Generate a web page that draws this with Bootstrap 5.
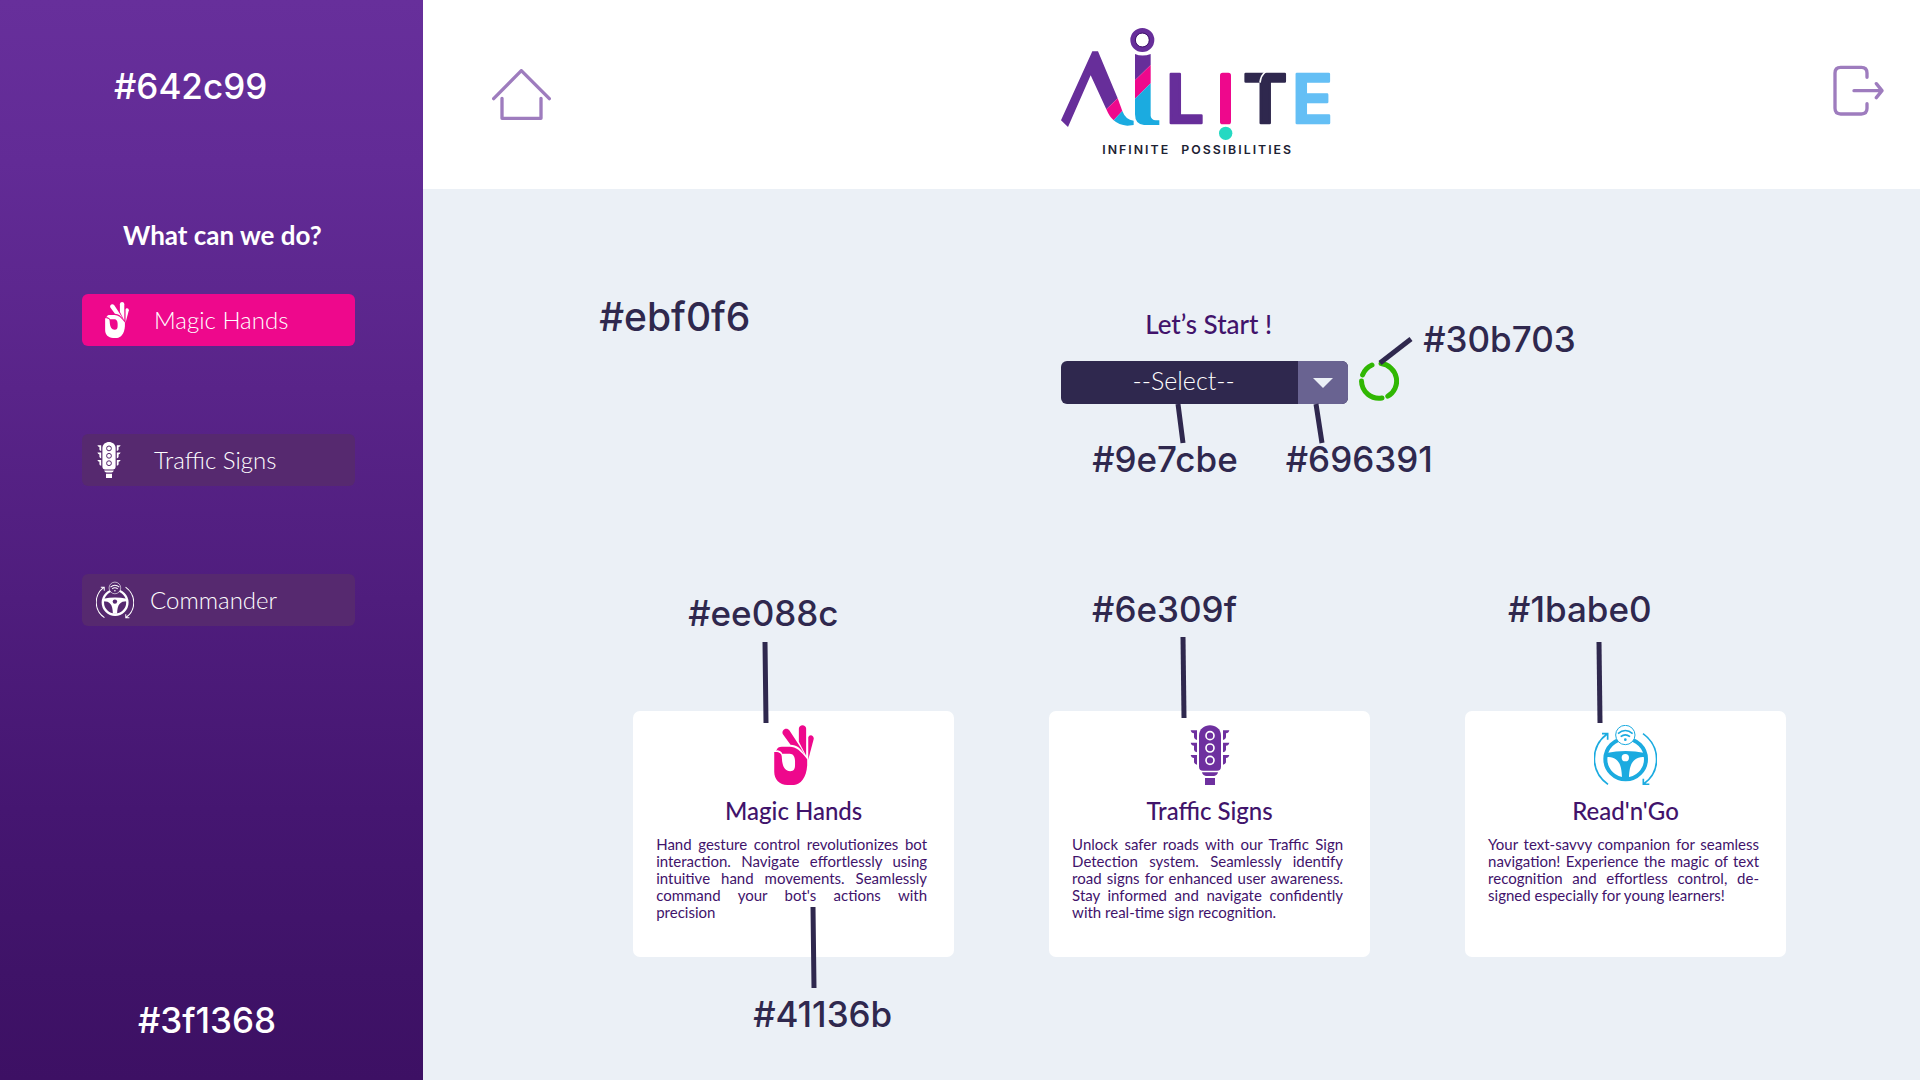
<!DOCTYPE html>
<html lang="en">
<head>
<meta charset="utf-8">
<meta name="viewport" content="width=device-width, initial-scale=1">
<title>AiLite – Infinite Possibilities</title>
<link href="https://cdn.jsdelivr.net/npm/bootstrap@5.3.0/dist/css/bootstrap.min.css" rel="stylesheet">
<style>
  :root { --ink: #2f284e; --deep: #41136b; --lilac: #9e7cbe; }
  body { background: #ebf0f6; color: var(--deep); font-family: Lato, "Open Sans", sans-serif; }
  .side { flex: 0 0 22.04%; min-width: 400px; padding: 66px 68px 40px 82px;
    background: linear-gradient(#672f9b 0%, #622b96 15%, #592489 36%, #451671 75%, #3f1368 90%, #3d1064 100%); }
  .side-title { font-size: 26px; font-weight: 700; line-height: 30px; margin: 114px 0 44px 41px; }
  .side-nav { gap: 88px; }
  .side-btn { --gap: #56296f; height: 52px; border: 0; border-radius: 6px; background: var(--gap); color: #fff;
    font-size: 24px; font-weight: 300; line-height: 30px; padding: 0 14px; }
  .side-btn.active { --gap: #ee088c; }
  .side-icon { width: 38px; height: 38px; flex: none; }
  .side-icon-s { height: 36px; width: 26px; }
  .tag { font-family: Inter, "Open Sans", sans-serif; font-size: 35px; font-weight: 500; line-height: 40px;
    color: var(--ink); white-space: nowrap; }
  .tag-lg { font-size: 39px; }
  .topbar { min-height: 189px; padding: 10px 36px 19px 69px; }
  .topbar a { color: var(--lilac); }
  .stroke-icon { fill: none; stroke: currentColor; stroke-width: 10; stroke-linecap: round; stroke-linejoin: round; }
  .start { padding: 108px 60px 110px 176px; }
  .start-left { flex: 0 0 462px; }
  .start-pick { flex: 0 0 287px; min-width: 0; padding-top: 12px; }
  .section-title { font-size: 24px; font-weight: 500; line-height: 30px; }
  .start-title { font-size: 26px; }
  .picker { height: 43px; border-radius: 6px; overflow: hidden; margin-top: 22px; }
  .picker select { appearance: none; width: 100%; height: 100%; border: 0; background: var(--ink); color: #fff;
    font-size: 25px; font-weight: 300; text-align: center; text-align-last: center; padding: 0 42px 4px 0; }
  .picker-arrow { position: absolute; inset: 0 0 0 auto; width: 50px; background: #696391; pointer-events: none; }
  .pick-tags { margin-top: 35px; padding-left: 31px; gap: 48px; }
  .start-spin { padding: 22px 0 0 11px; gap: 24px; }
  .spinner-ring { margin-top: 42px; }
  .pointer { position: absolute; overflow: visible; stroke: var(--ink); stroke-width: 5; pointer-events: none; }
  .features { padding: 0 134px 40px 210px; gap: 95px; }
  .feature { flex: 1 1 0; min-width: 300px; }
  .feature-head { height: 122px; padding-left: 43px; }
  .feature-head-in { padding-left: 12px; }
  .feature-foot { margin-top: 37px; padding-left: 120px; }
  .feature-card { --gap: #fff; min-height: 246px; border: 0; border-radius: 7px; padding: 14px 0 16px; }
  .feature-card h2 { margin: 11px 0 0; }
  .feature-card p { font-size: 15px; line-height: 17px; text-align: justify; margin: 10px 0 0; padding: 0 27px 0 23px; }
</style>
</head>
<body>
<svg width="0" height="0" class="position-absolute" aria-hidden="true">
  <symbol id="hand" viewBox="465 438 114 173">
    <g fill="currentColor">
      <path d="M490 465C484 452 501 442 509 454L541 503 553 524C541 505 530 495 512 495Z"/>
      <path d="M536 449C536 435 557 435 557 449V527L536 486Z"/>
      <path d="M563 475C565 464 579 466 579 478L563 538Z"/>
      <path d="M471 512C474 504 479 501 487 501H510C527 501 542 513 560 537V555C558 590 540 611 522 611H503C480 611 465 595 465 573V516H473C483 518 487 522 487 533C488 558 496 571 511 571C522 571 525 563 525 553V542C525 529 519 521 510 521H488C485 514 479 512 471 512Z"/>
      <path d="M472 512Q482 512 487 521" fill="none" stroke="var(--gap)" stroke-width="3"/>
    </g>
  </symbol>
  <symbol id="traffic" viewBox="482 435 116 180">
    <g fill="currentColor">
      <path d="M507 467C507 425 573 425 573 467V560Q573 572 561 572H519Q507 572 507 560Z"/>
      <path d="M482 451H501V480Q493 479 492 472V460Q484 460 482 451Z"/>
      <path d="M482 488H501V517Q493 516 492 509V497Q484 497 482 488ZM482 525H501V554Q493 553 492 546V534Q484 534 482 525Z"/>
      <path d="M598 451H579V480Q587 479 588 472V460Q596 460 598 451ZM598 488H579V517Q587 516 588 509V497Q596 497 598 488ZM598 525H579V554Q587 553 588 546V534Q596 534 598 525Z"/>
      <path d="M516 577H564Q562 587 552 588H528Q518 587 516 577ZM525 594H555V615H525Z"/>
    </g>
    <g fill="none" stroke="var(--gap)" stroke-width="5">
      <circle cx="540" cy="467" r="12"/><circle cx="540" cy="504" r="12"/><circle cx="540" cy="541" r="12"/>
    </g>
  </symbol>
  <symbol id="wheel" viewBox="429 435 189 180">
    <circle cx="524" cy="537" r="61" fill="none" stroke="currentColor" stroke-width="12"/>
    <path fill="currentColor" d="M466 519Q524 507 582 519V531C550 531 535 545 534 594H513C512 545 498 531 466 531Z"/>
    <circle cx="523" cy="533" r="11" fill="var(--gap)"/>
    <circle cx="523" cy="465" r="29" fill="var(--gap)" stroke="currentColor" stroke-width="3"/>
    <g fill="none" stroke="currentColor" stroke-width="5">
      <path d="M501 461Q523 442 545 461M509 470Q523 459 537 470"/>
      <path d="M471 613C417 575 417 500 468 462M453 461H470V479M576 461C630 500 630 575 578 612M577 596V613H595"/>
    </g>
    <circle cx="523" cy="479" r="4" fill="currentColor"/>
  </symbol>
</svg>

<div class="d-flex min-vh-100">
  <aside class="side d-flex flex-column text-white">
    <div class="tag text-white ms-4 ps-2">#642c99</div>
    <h1 class="side-title">What can we do?</h1>
    <nav class="side-nav d-flex flex-column">
      <button type="button" class="side-btn active d-flex align-items-center"><svg class="side-icon side-icon-s ms-2 me-3"><use href="#hand"/></svg><span class="ps-2">Magic Hands</span></button>
      <button type="button" class="side-btn d-flex align-items-center"><svg class="side-icon side-icon-s me-4"><use href="#traffic"/></svg><span class="ps-2">Traffic Signs</span></button>
      <button type="button" class="side-btn d-flex align-items-center"><svg class="side-icon me-3"><use href="#wheel"/></svg><span>Commander</span></button>
    </nav>
    <div class="tag text-white mt-auto ms-5 ps-2">#3f1368</div>
  </aside>

  <div class="flex-grow-1 d-flex flex-column">
    <header class="topbar bg-white d-flex justify-content-between align-items-center">
      <a href="#" class="pt-2" aria-label="Home"><svg class="stroke-icon d-block" width="59" height="51" viewBox="96 87 177 153"><path d="M101 176L184 92L268 176M126 175V235H243V175"/></svg></a>
      <svg width="320" height="160" viewBox="-24 0 960 480" role="img" aria-label="AiLite Infinite Possibilities">
        <path fill="#672e9a" d="M157 124H174L233 265 199 298 152 196 84 351 63 331Z"/>
        <path fill="#ee088c" d="M199 298L233 265 247 303 221 331Q208 320 199 298Z"/>
        <path fill="#1babe0" d="M221 331L247 303Q257 330 281 332V345L262 347Q236 345 221 331Z"/>
        <circle cx="307" cy="90" r="28" fill="none" stroke="#672e9a" stroke-width="16"/>
        <circle cx="307" cy="90" r="21" fill="none" stroke="#41136b" stroke-width="3"/>
        <path fill="#672e9a" d="M285 132Q307 141 332 132V165L285 211Z"/>
        <path fill="#ee088c" d="M285 211L332 165V220L285 266Z"/>
        <path fill="#1babe0" d="M285 266L332 220V318Q334 330 347 331H358V345H312Q285 343 285 313Z"/>
        <g font-family="Inter, sans-serif" font-weight="600" font-size="202" stroke-width="8" stroke-linejoin="round">
          <text x="378" y="339" fill="#672e9a" stroke="#672e9a">L</text>
          <text x="609" y="339" fill="#2f284e" stroke="#2f284e">T</text>
          <text x="756" y="339" fill="#64bff5" stroke="#64bff5">E</text>
        </g>
        <path fill="none" stroke="#fff" stroke-width="5" d="M660 218Q662 196 678 184"/>
        <rect x="540" y="188" width="33" height="155" rx="8" fill="#ee088c"/>
        <circle cx="557" cy="370" r="20" fill="#25d9c2"/>
        <text x="187" y="432" font-family="Inter, sans-serif" font-weight="600" font-size="37" letter-spacing="6" word-spacing="18" fill="#1d2233">INFINITE POSSIBILITIES</text>
      </svg>
      <a href="#" aria-label="Log out"><svg class="stroke-icon d-block" width="51" height="51" viewBox="101 76 153 153"><path d="M203 113V100Q203 83 186 83H124Q107 83 107 100V206Q107 223 124 223H186Q203 223 203 206V192M164 153H246M231 132L248 153L231 174"/></svg></a>
    </header>

    <main class="flex-grow-1">
      <section class="start d-flex align-items-start">
        <div class="start-left tag tag-lg">#ebf0f6</div>
        <div class="start-pick position-relative">
          <label for="mode" class="section-title start-title d-block text-center ps-2">Let’s Start !</label>
          <div class="picker position-relative">
            <select id="mode"><option>--Select--</option><option>Magic Hands</option><option>Traffic Signs</option><option>Read'n'Go</option></select>
            <span class="picker-arrow d-flex align-items-center justify-content-center"><svg width="20" height="10"><path fill="#ebf0f6" d="M0 0H20L10 10Z"/></svg></span>
          </div>
          <div class="pick-tags d-flex"><span class="tag">#9e7cbe</span><span class="tag">#696391</span></div>
          <svg class="pointer" style="left:117px;top:107px" width="6" height="39"><path d="M0 0L5 39M138 0L144 39"/></svg>
        </div>
        <div class="start-spin position-relative d-flex align-items-start">
          <svg class="spinner-ring" width="40" height="40" fill="none" stroke="#30b703" stroke-width="5" stroke-linecap="round" role="img" aria-label="Loading"><path d="M22 2.6A17.5 17.5 0 0 1 28.8 35.2M23 37A17.5 17.5 0 0 1 2.5 20M3.6 13.9A17.5 17.5 0 0 1 13 4"/></svg>
          <span class="tag">#30b703</span>
          <svg class="pointer" style="left:32px;top:42px" width="31" height="24"><path d="M0 24L31 0"/></svg>
        </div>
      </section>

      <section class="features d-flex align-items-start">
        <article class="feature position-relative">
          <div class="feature-head tag pt-1"><span class="feature-head-in">#ee088c</span></div>
          <div class="feature-card card">
            <svg class="mx-auto" width="40" height="60" style="color:#ee088c"><use href="#hand"/></svg>
            <h2 class="section-title text-center">Magic Hands</h2>
            <p>Hand gesture control revolutionizes bot interaction. Navigate effortlessly using intuitive hand movements. Seamlessly command your bot's actions with precision</p>
          </div>
          <svg class="pointer" style="left:132px;top:53px" width="2" height="81"><path d="M0 0L1 81M48 265L49 346"/></svg>
          <div class="tag feature-foot">#41136b</div>
        </article>
        <article class="feature position-relative">
          <div class="feature-head tag">#6e309f</div>
          <div class="feature-card card">
            <svg class="mx-auto" width="60" height="60" style="color:#6e309f"><use href="#traffic"/></svg>
            <h2 class="section-title text-center">Traffic Signs</h2>
            <p>Unlock safer roads with our Traffic Sign Detection system. Seamlessly identify road signs for enhanced user awareness. Stay informed and navigate confidently with real-time sign recognition.</p>
          </div>
          <svg class="pointer" style="left:134px;top:48px" width="2" height="81"><path d="M0 0L1 81"/></svg>
        </article>
        <article class="feature position-relative">
          <div class="feature-head tag">#1babe0</div>
          <div class="feature-card card">
            <svg class="mx-auto" width="63" height="60" style="color:#1babe0"><use href="#wheel"/></svg>
            <h2 class="section-title text-center">Read'n'Go</h2>
            <p>Your text-savvy companion for seamless navigation! Experience the magic of text recognition and effortless control, de&shy;signed especially for young learners!</p>
          </div>
          <svg class="pointer" style="left:134px;top:53px" width="2" height="81"><path d="M0 0L1 81"/></svg>
        </article>
      </section>
    </main>
  </div>
</div>
<script src="https://cdn.jsdelivr.net/npm/bootstrap@5.3.0/dist/js/bootstrap.bundle.min.js"></script>
</body>
</html>
